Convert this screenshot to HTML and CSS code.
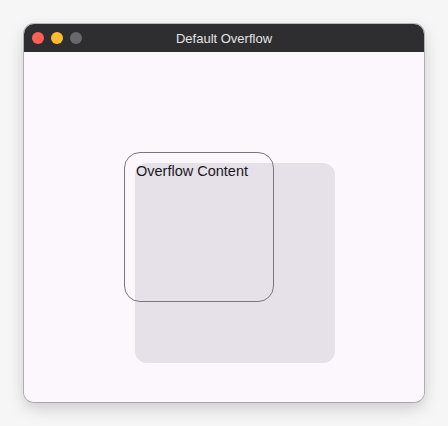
FILE: index.html
```html
<!DOCTYPE html>
<html>
<head>
<meta charset="utf-8">
<link rel="stylesheet" href="styles.css">
</head>
<body>
<div class="window">
  <div class="titlebar">
    <div class="lights">
      <span class="light red"></span>
      <span class="light yellow"></span>
      <span class="light grey"></span>
    </div>
    <div class="title">Default Overflow</div>
  </div>
  <div class="content">
    <div class="outer">
      <div class="inner">Overflow Content</div>
    </div>
  </div>
</div>
</body>
</html>
```
FILE: styles.css
```css
html, body {
  margin: 0;
  padding: 0;
  background: #f6f6f6;
  font-family: "Liberation Sans", Arial, sans-serif;
}
body {
  padding: 24px;
  width: 400px;
}
.window {
  width: 400px;
  height: 378px;
  border-radius: 10px;
  overflow: hidden;
  background: #fcf7fd;
  box-shadow: 0 0 0 1px rgba(0,0,0,0.22), 0 6px 16px rgba(0,0,0,0.18);
  display: flex;
  flex-direction: column;
}
.titlebar {
  height: 28px;
  background: #2e2d30;
  position: relative;
  display: flex;
  align-items: center;
  justify-content: center;
  flex: none;
}
.lights {
  position: absolute;
  left: 8px;
  top: 8px;
  display: flex;
  gap: 7px;
}
.light {
  width: 12px;
  height: 12px;
  border-radius: 50%;
  display: block;
}
.red { background: #fe5f57; }
.yellow { background: #febc2e; }
.grey { background: #68676b; }
.title {
  color: #e4e4e6;
  font-size: 13px;
}
.content {
  flex: 1;
  background: #fcf7fd;
  padding: 100px;
}
.outer {
  position: relative;
  width: 128px;
  height: 128px;
  padding: 11px;
  border-radius: 16px;
}
.outer::after {
  content: "";
  position: absolute;
  inset: 0;
  border: 1px solid #7b7580;
  border-radius: 16px;
  pointer-events: none;
}
.inner {
  width: 199px;
  height: 200px;
  padding-left: 1px;
  background: #e6e1e8;
  border-radius: 12px;
  font-size: 14.5px;
  color: #1a181c;
  line-height: 17px;
}
```
